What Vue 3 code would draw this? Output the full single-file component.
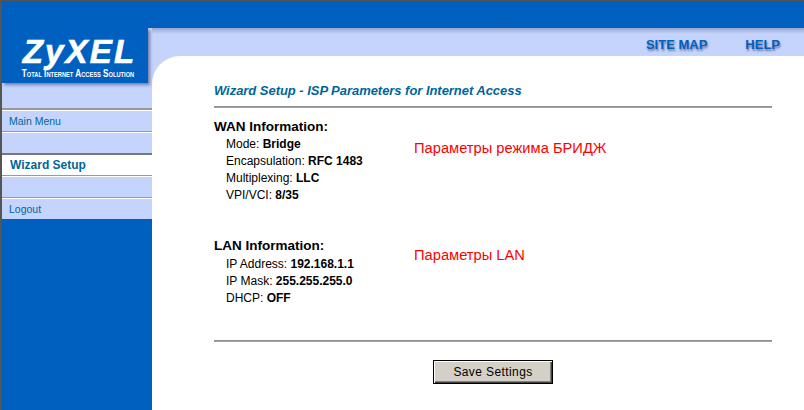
<template>
  <div class="window">
    <div class="topbar"></div>
    <div class="body">
      <aside class="sidebar">
        <div class="logo">
          <div class="logo-name">ZyXEL</div>
          <div class="logo-tag">Total Internet Access Solution</div>
        </div>
        <nav class="menu">
          <div
            v-for="item in menu"
            :key="item.id"
            class="menu-row"
            :class="{ active: item.active }"
          >
            {{ item.label }}
          </div>
        </nav>
        <div class="sidebar-fill"></div>
      </aside>
      <div class="content">
        <div class="toplinks">
          <a class="toplink">SITE MAP</a>
          <a class="toplink">HELP</a>
        </div>
        <main class="main">
          <h1 class="title">Wizard Setup - ISP Parameters for Internet Access</h1>
          <hr class="rule" />
          <section v-for="block in blocks" :key="block.title" class="block">
            <div class="info">
              <h2 class="info-title">{{ block.title }}</h2>
              <div v-for="row in block.rows" :key="row.name" class="info-row">
                {{ row.name }}: <b>{{ row.value }}</b>
              </div>
            </div>
            <div class="note" :class="block.noteClass">{{ block.note }}</div>
          </section>
          <hr class="rule rule-bottom" />
          <div class="actions">
            <button class="save-btn">Save Settings</button>
          </div>
        </main>
      </div>
    </div>
  </div>
</template>

<script setup>
const menu = [
  { id: 1, label: 'Main Menu' },
  { id: 2, label: '' },
  { id: 3, label: 'Wizard Setup', active: true },
  { id: 4, label: '' },
  { id: 5, label: 'Logout' }
]

const blocks = [
  {
    title: 'WAN Information:',
    note: 'Параметры режима БРИДЖ',
    noteClass: 'note-wan',
    rows: [
      { name: 'Mode', value: 'Bridge' },
      { name: 'Encapsulation', value: 'RFC 1483' },
      { name: 'Multiplexing', value: 'LLC' },
      { name: 'VPI/VCI', value: '8/35' }
    ]
  },
  {
    title: 'LAN Information:',
    note: 'Параметры LAN',
    noteClass: 'note-lan',
    rows: [
      { name: 'IP Address', value: '192.168.1.1' },
      { name: 'IP Mask', value: '255.255.255.0' },
      { name: 'DHCP', value: 'OFF' }
    ]
  }
]
</script>

<style>
html,
body {
  margin: 0;
  overflow: hidden;
}
</style>

<style scoped>
.window {
  box-sizing: border-box;
  width: 804px;
  height: 410px;
  overflow: hidden;
  display: flex;
  flex-direction: column;
  border-top: 1px solid #555;
  border-left: 2px solid #555;
  background: #0060c0;
  font-family: "Liberation Sans", Arial, sans-serif;
}

.topbar {
  height: 27px;
  flex: none;
}

.body {
  flex: 1;
  display: flex;
  min-height: 0;
}

.sidebar {
  width: 150px;
  flex: none;
  display: flex;
  flex-direction: column;
  background: #c5d4fd;
}

.sidebar-fill {
  flex: 1;
  background: #0060c0;
}

.logo {
  width: 146px;
  height: 55px;
  box-sizing: border-box;
  background: #0060c0;
  box-shadow: 2px 2px 3px rgba(60, 70, 110, 0.6);
  color: #fff;
  padding-top: 7px;
  text-align: center;
  position: relative;
  z-index: 1;
}

.logo-name {
  font-size: 33px;
  line-height: 33px;
  font-weight: bold;
  font-style: italic;
  letter-spacing: 2.2px;
  margin-left: 9px;
  -webkit-text-stroke: 0.7px #fff;
}

.logo-tag {
  font-size: 10px;
  line-height: 11px;
  font-weight: bold;
  font-variant: small-caps;
  white-space: nowrap;
  margin-left: 6px;
  transform: scaleX(0.815);
}

.menu {
  margin-top: 25px;
  display: flex;
  flex-direction: column;
}

.menu-row {
  height: 21px;
  border-top: 1px solid #999;
  box-shadow: inset 0 1px 0 #fff;
  padding-left: 7px;
  font-size: 10.5px;
  line-height: 22px;
  color: #006699;
  background: #c5d4fd;
}

.menu-row:first-child {
  border-top: 2px solid #999;
}

.menu-row.active {
  background: #fff;
  border-top: 2px solid #777;
  height: 20px;
  font-size: 12px;
  font-weight: bold;
  line-height: 20px;
  padding-left: 8px;
}

.content {
  flex: 1;
  display: flex;
  flex-direction: column;
  background: #c5d4fd;
  min-width: 0;
}

.toplinks {
  height: 28px;
  flex: none;
  box-sizing: border-box;
  display: flex;
  justify-content: flex-end;
  align-items: flex-start;
  gap: 38px;
  padding: 10px 24px 0 0;
  background: linear-gradient(#9aa6cc, #c5d4fd 6px);
}

.toplink {
  font-size: 13px;
  line-height: 13px;
  font-weight: bold;
  color: #0060c0;
  text-shadow: 1px 2px 2px rgba(40, 50, 90, 0.55);
}

.main {
  flex: 1;
  background: #fff;
  border-top-left-radius: 28px;
  padding: 27px 32px 0 62px;
}

.title {
  margin: 0;
  font-size: 13px;
  line-height: 15px;
  font-weight: bold;
  font-style: italic;
  letter-spacing: -0.04px;
  color: #006699;
}

.rule {
  border: 0;
  height: 2px;
  margin: 8px 0 0;
  background: linear-gradient(#888, #aaa);
}

.block {
  display: flex;
  height: 119px;
}

.block:first-of-type {
  margin-top: 11px;
}

.info {
  width: 200px;
}

.info-title {
  margin: 0 0 1px;
  font-size: 13.5px;
  line-height: 16px;
  font-weight: bold;
  color: #000;
}

.block + .block .info-title {
  margin-bottom: 2px;
}

.info-row {
  font-size: 12px;
  line-height: 17px;
  padding-left: 12px;
  color: #000;
  white-space: nowrap;
}

.note {
  font-size: 14.7px;
  line-height: 16px;
  color: #f00;
}

.note-wan {
  padding-top: 21px;
}

.note-lan {
  padding-top: 9px;
}

.rule-bottom {
  margin-top: -17px;
}

.actions {
  display: flex;
  justify-content: center;
  margin-top: 18px;
}

.save-btn {
  width: 120px;
  height: 24px;
  box-sizing: border-box;
  padding: 0;
  background: #d4d0c8;
  border: 1px solid #000;
  box-shadow: inset 1px 1px 0 #fff, inset -1px -1px 0 #404040, inset -2px -2px 0 #808080;
  font-family: "Liberation Sans", Arial, sans-serif;
  font-size: 12px;
  letter-spacing: 0.4px;
  color: #000;
}
</style>
